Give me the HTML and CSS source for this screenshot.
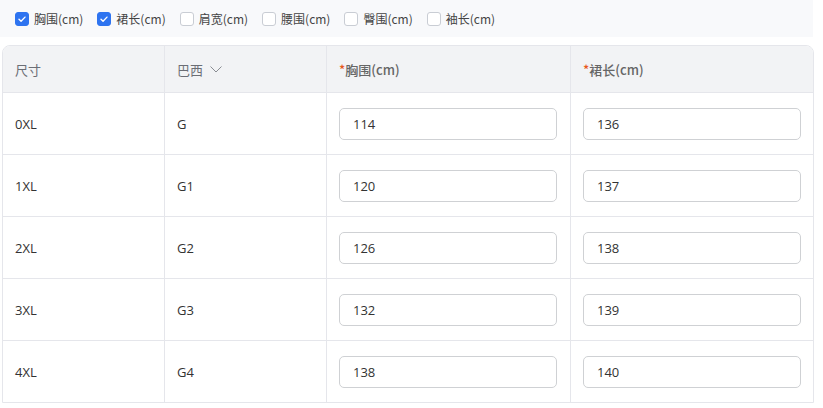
FILE: index.html
```html
<!DOCTYPE html>
<html lang="zh">
<head>
<meta charset="utf-8">
<link rel="stylesheet" href="styles.css">
</head>
<body>
<div class="filters">
  <label class="chk"><span class="box on"><svg viewBox="0 0 14 14"><path d="M3.5 7.2l2.4 2.4 4.6-4.8" fill="none" stroke="#fff" stroke-width="1.6" stroke-linecap="round" stroke-linejoin="round"/></svg></span>胸围(cm)</label>
  <label class="chk"><span class="box on"><svg viewBox="0 0 14 14"><path d="M3.5 7.2l2.4 2.4 4.6-4.8" fill="none" stroke="#fff" stroke-width="1.6" stroke-linecap="round" stroke-linejoin="round"/></svg></span>裙长(cm)</label>
  <label class="chk"><span class="box"></span>肩宽(cm)</label>
  <label class="chk"><span class="box"></span>腰围(cm)</label>
  <label class="chk"><span class="box"></span>臀围(cm)</label>
  <label class="chk"><span class="box"></span>袖长(cm)</label>
</div>
<div class="table">
  <div class="row head">
    <div class="cell">尺寸</div>
    <div class="cell">巴西 <svg class="caret" viewBox="0 0 14 14"><path d="M1.5 4.5l5.5 5.5 5.5-5.5" fill="none" stroke="#8a8d93" stroke-width="1"/></svg></div>
    <div class="cell"><span class="req">*</span>胸围(cm)</div>
    <div class="cell"><span class="req">*</span>裙长(cm)</div>
  </div>
  <div class="row"><div class="cell">0XL</div><div class="cell">G</div><div class="cell"><div class="input">114</div></div><div class="cell"><div class="input">136</div></div></div>
  <div class="row"><div class="cell">1XL</div><div class="cell">G1</div><div class="cell"><div class="input">120</div></div><div class="cell"><div class="input">137</div></div></div>
  <div class="row"><div class="cell">2XL</div><div class="cell">G2</div><div class="cell"><div class="input">126</div></div><div class="cell"><div class="input">138</div></div></div>
  <div class="row"><div class="cell">3XL</div><div class="cell">G3</div><div class="cell"><div class="input">132</div></div><div class="cell"><div class="input">139</div></div></div>
  <div class="row"><div class="cell">4XL</div><div class="cell">G4</div><div class="cell"><div class="input">138</div></div><div class="cell"><div class="input">140</div></div></div>
</div>
</body>
</html>
```
FILE: styles.css
```css
* { box-sizing: border-box; }
body {
  margin: 0;
  background: #fff;
  font-family: "Open Sans", "Noto Sans CJK SC", sans-serif;
  color: #333;
}
.filters {
  height: 37px;
  width: 813px;
  background: #f8f9fb;
  display: flex;
  align-items: center;
  padding-left: 15px;
  gap: 14px;
}
.chk {
  display: flex;
  align-items: center;
  gap: 5px;
  font-size: 12px;
  color: #444;
  font-family: "Noto Sans CJK SC", sans-serif;
}
.box {
  width: 14px;
  height: 14px;
  border: 1px solid #c9cdd4;
  border-radius: 3px;
  background: #fff;
  display: flex;
}
.box.on {
  background: #2e74f0;
  border-color: #2e74f0;
}
.box svg { width: 12px; height: 12px; }
.table {
  margin: 8px 0 0 2px;
  width: 812px;
  border: 1px solid #e5e6eb;
  border-radius: 8px 8px 0 0;
  overflow: hidden;
}
.row {
  display: grid;
  grid-template-columns: 161px 162px 244px 1fr;
  height: 62px;
  border-top: 1px solid #e5e6eb;
}
.row.head {
  height: 46px;
  border-top: none;
  background: #f2f3f5;
  color: #666;
  font-size: 13px;
}
.cell {
  display: flex;
  align-items: center;
  padding-left: 12px;
  padding-right: 12px;
  font-size: 13px;
  border-left: 1px solid #e5e6eb;
}
.cell:first-child { border-left: none; }
.head .cell { color: #6b6e75; font-family: "Noto Sans CJK SC", sans-serif; }
.head .cell:nth-child(3), .head .cell:nth-child(4) { font-weight: 500; color: #666; }
.req { color: #e8581c; }
.caret { width: 14px; height: 14px; margin-left: 6px; }
.input {
  width: 218px;
  height: 32px;
  border: 1px solid #cfd1d4;
  border-radius: 5px;
  display: flex;
  align-items: center;
  padding-left: 13px;
  font-size: 13px;
  color: #333;
}
```
